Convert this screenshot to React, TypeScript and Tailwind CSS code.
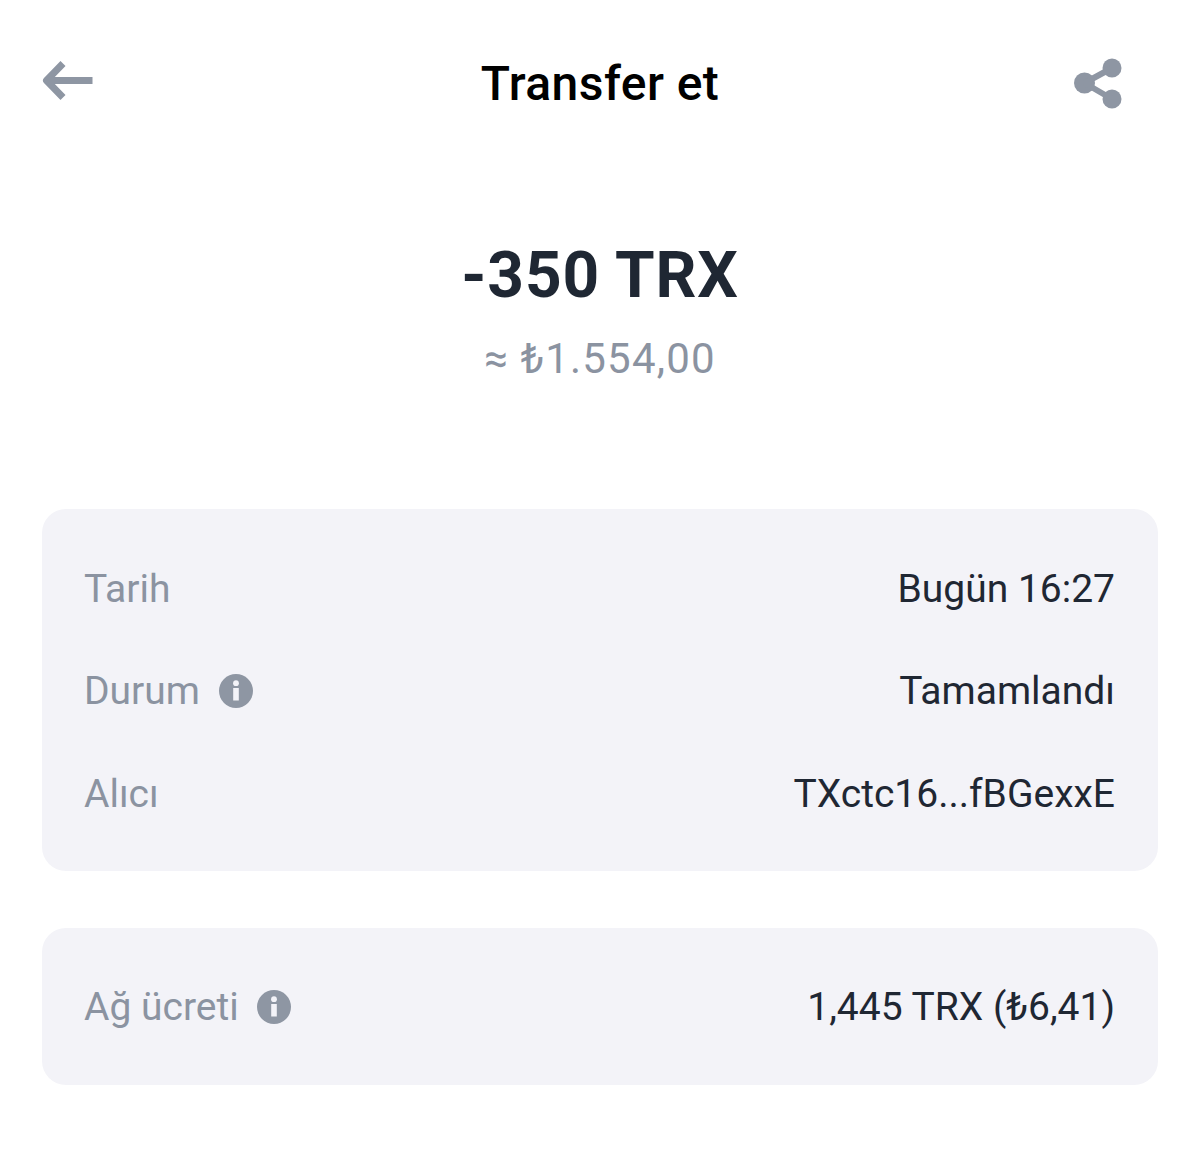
import React from "react";

function Info({ className }: { className: string }) {
  return (
    <svg viewBox="0 0 34 34" className={className}>
      <circle cx="17" cy="17" r="17" fill="#8e96a3" />
      <rect x="14.2" y="14" width="5.6" height="12.5" fill="#f3f3f8" />
      <circle cx="17" cy="9.2" r="2.9" fill="#f3f3f8" />
    </svg>
  );
}

function Row({ label, value, info }: { label: string; value: string; info?: boolean }) {
  return (
    <div className="flex h-[102.5px] items-center justify-between">
      <div className="flex items-center gap-[18.5px] text-[#8b93a1]">
        <span>{label}</span>
        {info && <Info className="h-[34px] w-[34px]" />}
      </div>
      <span className="pr-px text-[#1f2733]">{value}</span>
    </div>
  );
}

export default function App() {
  return (
    <div className="h-[1153px] w-[1200px] overflow-hidden bg-white font-['Roboto',sans-serif] text-[39px] leading-[46px]">
      <header className="grid h-[168px] grid-cols-[1fr_auto_1fr] items-start pl-[42px] pr-[78px] pt-[58px]">
        <svg viewBox="0 0 52 42" className="mt-[2px] h-[42px] w-[52px]" fill="none" stroke="#8e96a3" strokeWidth="7">
          <path d="M21 3.5 L4.5 20.5 L21 37.5" strokeLinejoin="round" />
          <path d="M6 20.5 H50.5" />
        </svg>
        <h1 className="relative left-[18px] mt-[1px] text-[48px] font-medium leading-[50px] tracking-[0.45px] text-black">Transfer et</h1>
        <svg viewBox="0 0 48 52" className="h-[52px] w-[48px] justify-self-end" fill="#8e96a3" stroke="#8e96a3">
          <circle cx="38" cy="10" r="9.5" stroke="none" />
          <circle cx="10.5" cy="25" r="10.5" stroke="none" />
          <circle cx="38" cy="41" r="9.5" stroke="none" />
          <path d="M10.5 25 L38 10 M10.5 25 L38 41" strokeWidth="6" />
        </svg>
      </header>
      <section className="flex flex-col items-center">
        <div className="mt-[70px] text-[64px] font-bold leading-[76px] tracking-[0.8px] text-[#1f2733]">-350 TRX</div>
        <div className="mt-[20px] text-[42px] leading-[50px] tracking-[1.2px] text-[#8b93a1]">≈ ₺1.554,00</div>
      </section>
      <div className="mx-[42px] mt-[125px] flex flex-col gap-[56.5px]">
        <div className="rounded-[24px] bg-[#f3f3f8] px-[42px] pb-[26px] pt-[28.5px]">
          <Row label="Tarih" value="Bugün 16:27" />
          <Row label="Durum" value="Tamamlandı" info />
          <Row label="Alıcı" value="TXctc16...fBGexxE" />
        </div>
        <div className="rounded-[24px] bg-[#f3f3f8] px-[42px] pb-[26px] pt-[28.5px]">
          <Row label="Ağ ücreti" value="1,445 TRX (₺6,41)" info />
        </div>
      </div>
    </div>
  );
}
